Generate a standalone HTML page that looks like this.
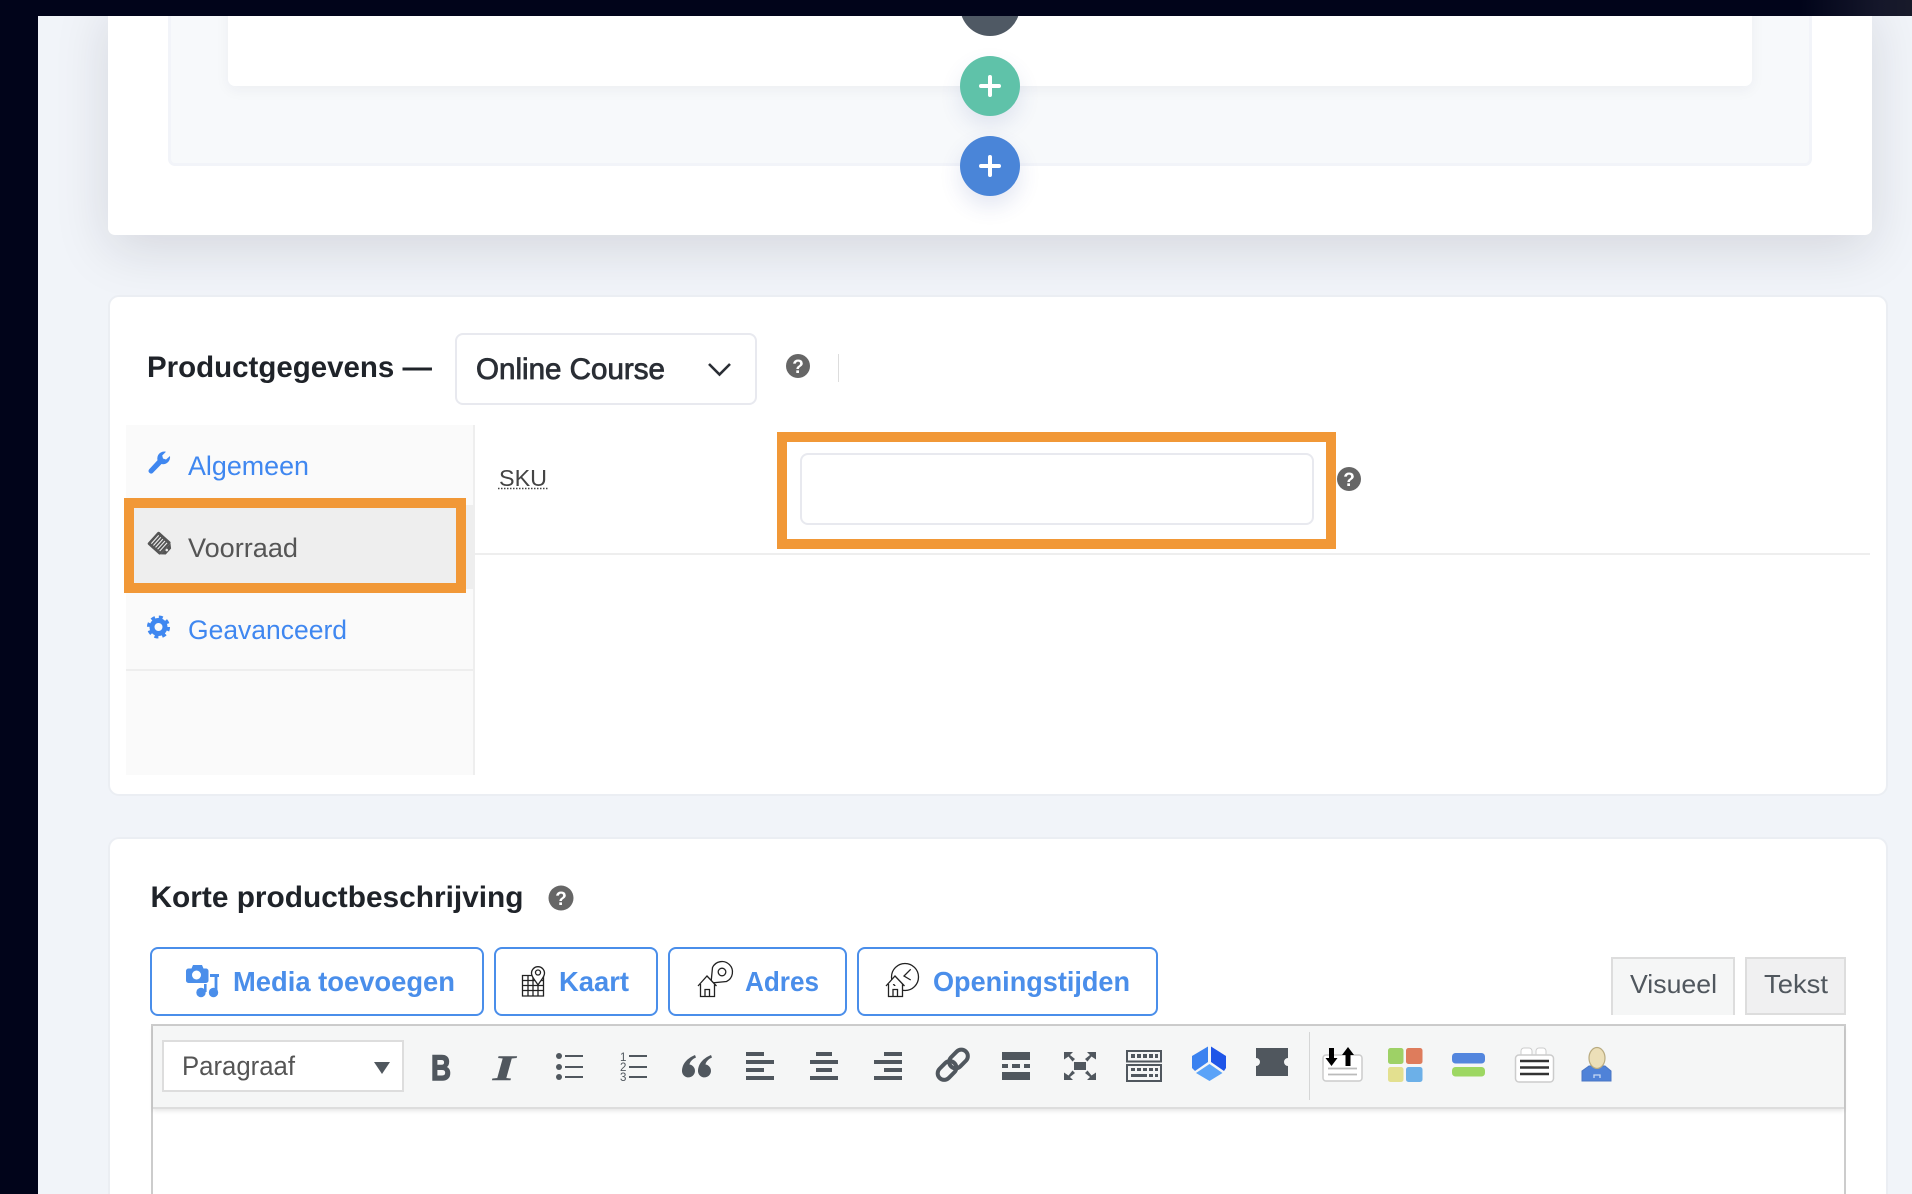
<!DOCTYPE html>
<html lang="nl"><head><meta charset="utf-8"><title>Product</title>
<style>
html,body{margin:0;padding:0;width:1912px;height:1194px;overflow:hidden;background:#f1f4f9}
#w{position:relative;width:1912px;height:1194px;overflow:hidden;background:#f1f4f9}
.a{position:absolute;box-sizing:border-box}
svg{position:absolute;left:0;top:0}
text{font-family:"Liberation Sans",sans-serif}
</style></head><body><div id="w">
<div class="a" style="left:108px;top:0;width:1764px;height:235px;background:#fff;border-radius:0 0 7px 7px;box-shadow:0 14px 55px rgba(20,25,40,.13)"></div>
<div class="a" style="left:168px;top:0;width:1644px;height:166px;background:#f7f9fb;border:3px solid #f2f4f9;border-top:0;border-radius:0 0 7px 7px"></div>
<div class="a" style="left:228px;top:0;width:1524px;height:86px;background:#fff;border-radius:0 0 7px 7px;box-shadow:0 4px 14px rgba(30,40,70,.05)"></div>
<svg width="1912" height="60" viewBox="0 0 1912 60" xmlns="http://www.w3.org/2000/svg"><circle cx="990" cy="6" r="30" fill="#4f5964"/></svg>
<div class="a" style="left:960px;top:56px;width:60px;height:60px;border-radius:50%;background:#5fc2a9;box-shadow:0 10px 22px rgba(60,80,160,.12)"></div>
<div class="a" style="left:960px;top:136px;width:60px;height:60px;border-radius:50%;background:#4a85d8;box-shadow:0 10px 22px rgba(60,80,160,.14)"></div>

<div class="a" style="left:108px;top:295px;width:1780px;height:501px;background:#fff;border:2px solid #ebeef3;border-radius:11px"></div>
<div class="a" style="left:126px;top:425px;width:349px;height:350px;background:#fafafa;border-right:2px solid #eee"></div>
<div class="a" style="left:126px;top:669px;width:347px;height:2px;background:#eee"></div>
<div class="a" style="left:126px;top:505px;width:349px;height:84px;background:#eee"></div>
<div class="a" style="left:475px;top:553px;width:1395px;height:2px;background:#eee"></div>
<div class="a" style="left:455px;top:333px;width:302px;height:72px;background:#fff;border:2px solid #e8e9ef;border-radius:8px"></div>
<div class="a" style="left:838px;top:354px;width:1px;height:28px;background:#ddd"></div>
<div class="a" style="left:800px;top:453px;width:514px;height:72px;background:#fff;border:2px solid #e8e9ef;border-radius:8px"></div>
<div class="a" style="left:777px;top:432px;width:559px;height:117px;border:10px solid #f19837"></div>
<div class="a" style="left:124px;top:498px;width:342px;height:95px;border:10px solid #f19837"></div>

<div class="a" style="left:108px;top:837px;width:1780px;height:357px;background:#fff;border:2px solid #ebeef3;border-bottom:0;border-radius:11px 11px 0 0"></div>
<div class="a" style="left:150px;top:947px;width:334px;height:69px;border:2px solid #4a8eea;border-radius:8px"></div>
<div class="a" style="left:494px;top:947px;width:164px;height:69px;border:2px solid #4a8eea;border-radius:8px"></div>
<div class="a" style="left:668px;top:947px;width:179px;height:69px;border:2px solid #4a8eea;border-radius:8px"></div>
<div class="a" style="left:857px;top:947px;width:301px;height:69px;border:2px solid #4a8eea;border-radius:8px"></div>
<div class="a" style="left:1611px;top:957px;width:124px;height:58px;background:#f5f6f6;border:2px solid #ddd;border-bottom:0"></div>
<div class="a" style="left:1745px;top:957px;width:101px;height:58px;background:#f0f0f1;border:2px solid #ddd"></div>
<div class="a" style="left:151px;top:1024px;width:1695px;height:170px;background:#fff;border:2px solid #ccc;border-bottom:0"></div>
<div class="a" style="left:153px;top:1026px;width:1691px;height:83px;background:#f5f6f6;border-bottom:2px solid #ddd;box-shadow:0 2px 4px rgba(0,0,0,.1)"></div>
<div class="a" style="left:162px;top:1040px;width:242px;height:52px;background:#fff;border:2px solid #ddd"></div>
<div class="a" style="left:1309px;top:1032px;width:1px;height:68px;background:#d5d6d6"></div>

<svg width="1912" height="1194" viewBox="0 0 1912 1194" xmlns="http://www.w3.org/2000/svg">
<g stroke="#fff" stroke-width="4" stroke-linecap="round">
<path d="M990 77v18M981 86h18M990 157v18M981 166h18"/>
</g>
<text x="147" y="377" font-size="30" font-weight="700" fill="#1f2329" textLength="285" lengthAdjust="spacingAndGlyphs">Productgegevens —</text>
<text x="476" y="379" font-size="29.500" fill="#2a2e35" stroke="#2a2e35" stroke-width=".8" textLength="189" lengthAdjust="spacingAndGlyphs">Online Course</text>
<path d="M709 364l10.500 10.500 10.500-10.500" fill="none" stroke="#2a2e35" stroke-width="2.600"/>
<g font-size="19" font-weight="700" fill="#fff" text-anchor="middle">
<circle cx="798" cy="366" r="12" fill="#666"/><text x="798" y="373">?</text>
<circle cx="1349" cy="479" r="12" fill="#666"/><text x="1349" y="486">?</text>
<circle cx="561" cy="898" r="12.500" fill="#666"/><text x="561" y="905">?</text>
</g>
<text x="188" y="475" font-size="26.500" fill="#3f87f0" textLength="121" lengthAdjust="spacingAndGlyphs">Algemeen</text>
<text x="188" y="557" font-size="26.500" fill="#555" textLength="110" lengthAdjust="spacingAndGlyphs">Voorraad</text>
<text x="188" y="639" font-size="26.500" fill="#3f87f0" textLength="159" lengthAdjust="spacingAndGlyphs">Geavanceerd</text>
<path fill="#3f87f0" d="M170 456l-4 3.500-3-1-.8-3 3.800-3.800a7 7 0 0 0-8.500 8.500L149 469.500a2.600 2.600 0 0 0 3.600 3.600L161.500 464a7 7 0 0 0 8.500-8z"/>
<g transform="rotate(42 159.500 543.500)">
<rect x="150.500" y="535" width="17" height="17" rx="1.500" fill="#555"/>
<path d="M167.500 536l4 3.500v8l-4 3.500z" fill="#555"/>
<path d="M153.500 538v11M156.300 538v11M159.100 538v11M161.900 538v11M164.700 538v11" stroke="#eee" stroke-width="1.100"/>
<circle cx="169.300" cy="543.500" r="1.300" fill="#eee"/>
</g>
<circle cx="158.500" cy="627" r="6.500" fill="none" stroke="#3f87f0" stroke-width="5"/>
<circle cx="158.500" cy="627" r="9.800" fill="none" stroke="#3f87f0" stroke-width="3.500" stroke-dasharray="3.900 3.800"/>
<text x="499" y="486" font-size="23.500" fill="#444" textLength="48" lengthAdjust="spacingAndGlyphs">SKU</text>
<path d="M498 488.500h50" stroke="#444" stroke-width="1.500" stroke-dasharray="1.500 1.500"/>
<text x="150.500" y="907" font-size="30" font-weight="700" fill="#1f2329" textLength="373" lengthAdjust="spacingAndGlyphs">Korte productbeschrijving</text>
<g font-size="27.500" font-weight="700" fill="#4a8eea">
<text x="233" y="991" textLength="222" lengthAdjust="spacingAndGlyphs">Media toevoegen</text>
<text x="559" y="991" textLength="70" lengthAdjust="spacingAndGlyphs">Kaart</text>
<text x="745" y="991" textLength="74" lengthAdjust="spacingAndGlyphs">Adres</text>
<text x="933" y="991" textLength="197" lengthAdjust="spacingAndGlyphs">Openingstijden</text>
</g>
<g fill="#4a8eea">
<path d="M186 971a2.500 2.500 0 0 1 2.500-2.500h3l1.500-3.500h9l1.500 3.500h2.500a2.500 2.500 0 0 1 2.500 2.500v9.500a2.500 2.500 0 0 1-2.500 2.500h-17.500a2.500 2.500 0 0 1-2.500-2.500z"/>
<circle cx="196.500" cy="975" r="4.500" fill="#fff"/>
<path d="M204 984h2.600v8h-2.600zM210 974h9v3h-1.600v15h-2.800v-15H210z"/>
<circle cx="201" cy="992.500" r="4.700"/><circle cx="213.500" cy="992.500" r="4.700"/>
</g>
<g fill="none" stroke="#222" stroke-width="1.300">
<path d="M522.500 975.500h21v20.500h-21zM522.500 980.500h21M522.500 985.500h21M522.500 990.500h21M528 975.500v20.500M533 975.500v20.500M538 975.500v20.500"/>
<path d="M538 985c-3-5-6.500-8-6.500-11.800a6.500 6.500 0 0 1 13 0c0 3.800-3.500 6.800-6.500 11.800z" fill="#fff"/>
<circle cx="538" cy="972.500" r="2.500"/>
</g>
<g fill="none" stroke="#222" stroke-width="1.300">
<path d="M711 983L712.500 967.500A10.500 10.500 0 1 1 726.500 981.500Z" fill="#fff"/>
<circle cx="722" cy="972" r="3.800"/>
<path d="M698 986l9-10 9.500 10M700.500 984v12.500h14V984M705 996.500v-7h4.500v7" fill="#fff"/>
</g>
<g fill="none" stroke="#222" stroke-width="1.300">
<circle cx="905" cy="977" r="13.500" fill="#fff"/>
<path d="M910.700 969.300l-6.700 6.700 6.700 4"/>
<path d="M886 986l9-10 9.500 10M888.500 984v12.500h14V984M893 996.500v-7h4.500v7" fill="#fff"/>
</g>
<text x="1630" y="993" font-size="26" fill="#50575e" textLength="87" lengthAdjust="spacingAndGlyphs">Visueel</text>
<text x="1764" y="993" font-size="26" fill="#50575e" textLength="64" lengthAdjust="spacingAndGlyphs">Tekst</text>
<text x="182" y="1075" font-size="27" fill="#555" textLength="113" lengthAdjust="spacingAndGlyphs">Paragraaf</text>
<path d="M374 1062h16l-8 12z" fill="#50575e"/>
<g fill="#50575e">
<text x="431" y="1080" font-size="35" font-weight="700" stroke="#50575e" stroke-width="1.400" textLength="20" lengthAdjust="spacingAndGlyphs">B</text>
<text x="493" y="1080" font-size="36" font-weight="700" font-style="italic" stroke="#50575e" stroke-width=".6" style="font-family:'Liberation Serif',serif" textLength="22" lengthAdjust="spacingAndGlyphs">I</text>
<circle cx="559" cy="1056" r="3"/><circle cx="559" cy="1067" r="3"/><circle cx="559" cy="1077" r="3"/>
<path d="M565 1055h18v2h-18zM565 1066h18v2h-18zM565 1076h18v2h-18zM629 1055h18v2h-18zM629 1066h18v2h-18zM629 1076h18v2h-18z"/>
<text x="620" y="1061" font-size="11.500">1</text><text x="620" y="1071" font-size="11.500">2</text><text x="620" y="1081" font-size="11.500">3</text>
<path d="M695 1055c-7 3-13 8-13 16.500a6.500 6.500 0 1 0 7.500-7c.5-3 3-5.500 6.500-7zM711 1055c-7 3-13 8-13 16.500a6.500 6.500 0 1 0 7.500-7c.5-3 3-5.500 6.500-7z"/>
<path d="M746 1052h18v4h-18zM746 1060h28v4h-28zM746 1068h18v4h-18zM746 1076h28v4h-28z"/>
<path d="M816 1052h16v4h-16zM810 1060h28v4h-28zM816 1068h16v4h-16zM810 1076h28v4h-28z"/>
<path d="M884 1052h18v4h-18zM874 1060h28v4h-28zM884 1068h18v4h-18zM874 1076h28v4h-28z"/>
<path d="M1002 1052h28v8h-28zM1002 1064h6v4h-6zM1012 1064h8v4h-8zM1024 1064h6v4h-6zM1002 1072h28v8h-28z"/>
<path d="M1074 1062h12v8h-12zM1064 1052h9l-3 3 5 4-2.500 2.500-4-5-4.500 3zM1096 1052h-9l3 3-5 4 2.500 2.500 4-5 4.500 3zM1064 1080h9l-3-3 5-4-2.500-2.500-4 5-4.500-3zM1096 1080h-9l3-3-5-4 2.500-2.500 4 5 4.500-3z"/>
<path d="M1256 1048h32v10a4 4 0 0 0 0 8v10h-32v-10a4 4 0 0 0 0-8z"/>
</g>
<g fill="none" stroke="#50575e" stroke-width="4">
<rect x="936.500" y="1064" width="21" height="13" rx="6.500" transform="rotate(-45 947 1070.500)"/>
<rect x="948" y="1052.500" width="21" height="13" rx="6.500" transform="rotate(-45 958.500 1059)"/>
</g>
<g fill="none" stroke="#50575e" stroke-width="2">
<rect x="1127" y="1051" width="34" height="10.500"/><rect x="1127" y="1065" width="34" height="16"/>
</g>
<path d="M1131 1054h4v4h-4zM1137 1054h4v4h-4zM1143 1054h4v4h-4zM1149 1054h4v4h-4zM1155 1054h3v4h-3zM1131 1068h4v3h-4zM1137 1068h4v3h-4zM1143 1068h4v3h-4zM1149 1068h4v3h-4zM1155 1068h3v3h-3zM1131 1074h16v3h-16zM1149 1074h4v3h-4zM1155 1074h3v3h-3z" fill="#50575e"/>
<path d="M1192 1056l16-9.500v15.500l-13 9-3-3z" fill="#3b82f0"/>
<path d="M1211 1046.500l15 9.500v12l-2 3-13-9z" fill="#1f55e8"/>
<path d="M1209.500 1064l13 9-13 8-13.500-8z" fill="#5aa3f8"/>
<rect x="1323" y="1055" width="39" height="26" rx="3" fill="#fff" stroke="#ccc" stroke-width="1.500"/>
<path d="M1329 1048h5v10h3.500l-6 8-6-8h3.500zM1348 1047l6 8h-3.500v11h-5v-11H1342z" fill="#000"/>
<path d="M1328 1068.500h29M1328 1074.500h29" stroke="#bbb" stroke-width="1.800"/>
<rect x="1388" y="1048" width="15.500" height="16" rx="2.500" fill="#9ed166"/>
<rect x="1406" y="1048" width="16.500" height="16" rx="2.500" fill="#de7c5c"/>
<rect x="1388" y="1067" width="15.500" height="15" rx="2.500" fill="#e3e08f"/>
<rect x="1406" y="1067" width="16.500" height="15" rx="2.500" fill="#6cb0e8"/>
<rect x="1452" y="1053" width="33" height="10.500" rx="3.500" fill="#5386de"/>
<rect x="1452" y="1067" width="33" height="9.500" rx="3.500" fill="#9dd762"/>
<rect x="1521" y="1048" width="11" height="9" rx="3" fill="#fff" stroke="#ccc"/>
<rect x="1536" y="1048" width="10" height="9" rx="3" fill="#fff" stroke="#ccc"/>
<rect x="1515.500" y="1055" width="38" height="27" rx="3.500" fill="#fff" stroke="#ccc" stroke-width="1.500"/>
<path d="M1520 1061h29M1520 1067.500h29M1520 1074h29" stroke="#333" stroke-width="2.400"/>
<path d="M1589 1066h16l6 5v10h-29v-10z" fill="#4f82d8" stroke="#4a76c4"/>
<ellipse cx="1597" cy="1058" rx="8" ry="10.500" fill="#ecdfb8" stroke="#b9ab80" stroke-width="1.200"/>
<path d="M1594 1078v-3h6v3" fill="none" stroke="#c6d8f3" stroke-width="1.300"/>
</svg>
<div class="a" style="left:0;top:0;width:38px;height:1194px;background:#01041a"></div>
<div class="a" style="left:0;top:0;width:1912px;height:16px;background:linear-gradient(90deg,#01041a 0,#01041a 1800px,#15172a 1880px,#181a2a 100%)"></div>
</div></body></html>
